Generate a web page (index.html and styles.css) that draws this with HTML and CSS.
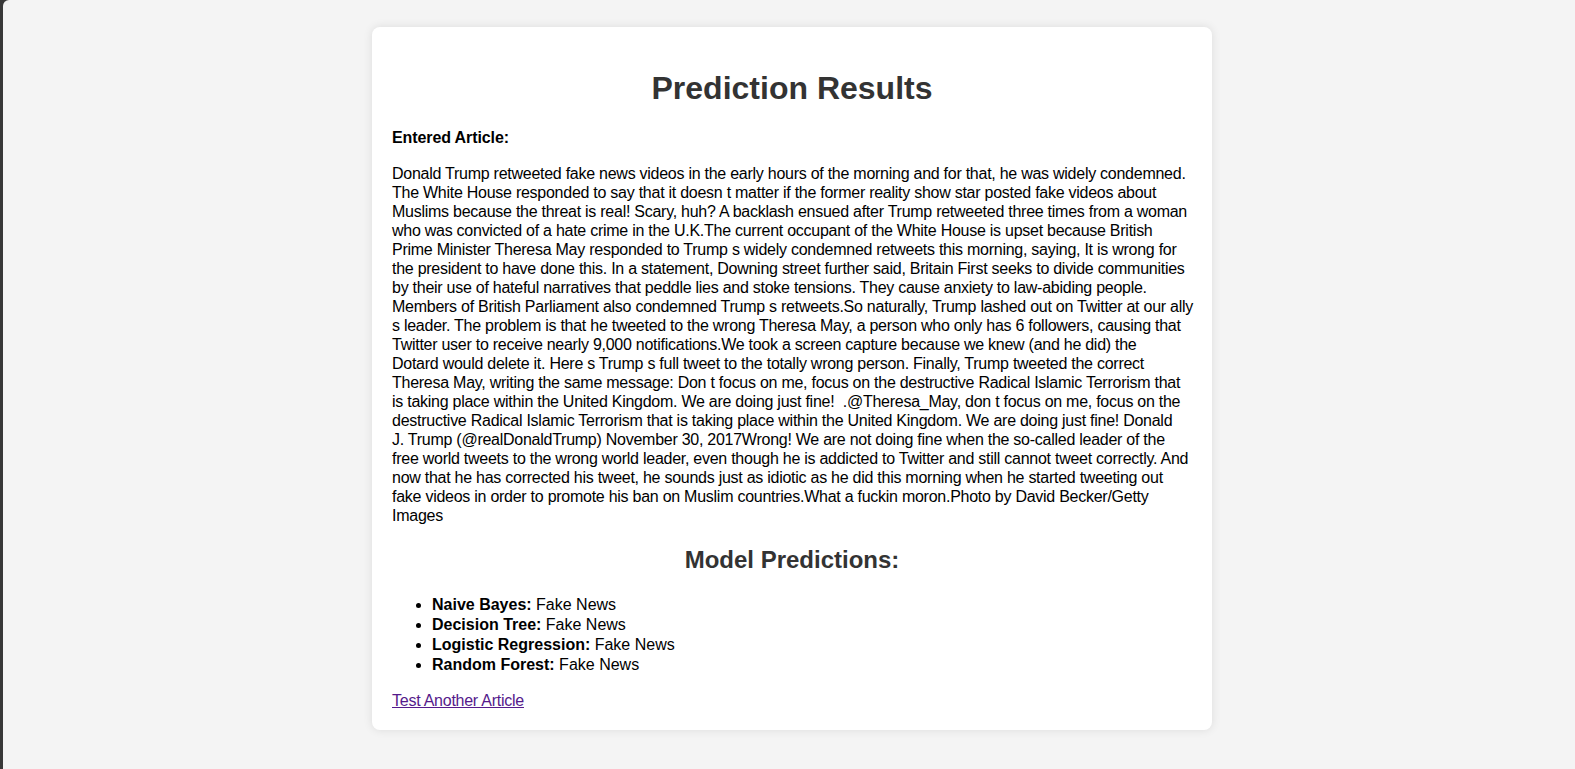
FILE: index.html
```html
<!DOCTYPE html>
<html lang="en">
<head>
<meta charset="utf-8">
<title>Prediction Results</title>
<link rel="stylesheet" href="styles.css">
</head>
<body>
<div class="card">
  <h1 class="title">Prediction Results</h1>
  <p class="label"><strong>Entered Article:</strong></p>
  <p class="article">Donald Trump retweeted fake news videos in the early hours of the morning and for that, he was widely condemned.<br>
The White House responded to say that it doesn t matter if the former reality show star posted fake videos about<br>
Muslims because the threat is real! Scary, huh? A backlash ensued after Trump retweeted three times from a woman<br>
who was convicted of a hate crime in the U.K.The current occupant of the White House is upset because British<br>
Prime Minister Theresa May responded to Trump s widely condemned retweets this morning, saying, It is wrong for<br>
the president to have done this. In a statement, Downing street further said, Britain First seeks to divide communities<br>
by their use of hateful narratives that peddle lies and stoke tensions. They cause anxiety to law-abiding people.<br>
Members of British Parliament also condemned Trump s retweets.So naturally, Trump lashed out on Twitter at our ally<br>
s leader. The problem is that he tweeted to the wrong Theresa May, a person who only has 6 followers, causing that<br>
Twitter user to receive nearly 9,000 notifications.We took a screen capture because we knew (and he did) the<br>
Dotard would delete it. Here s Trump s full tweet to the totally wrong person. Finally, Trump tweeted the correct<br>
Theresa May, writing the same message: Don t focus on me, focus on the destructive Radical Islamic Terrorism that<br>
is taking place within the United Kingdom. We are doing just fine!&nbsp; .@Theresa_May, don t focus on me, focus on the<br>
destructive Radical Islamic Terrorism that is taking place within the United Kingdom. We are doing just fine! Donald<br>
J. Trump (@realDonaldTrump) November 30, 2017Wrong! We are not doing fine when the so-called leader of the<br>
free world tweets to the wrong world leader, even though he is addicted to Twitter and still cannot tweet correctly. And<br>
now that he has corrected his tweet, he sounds just as idiotic as he did this morning when he started tweeting out<br>
fake videos in order to promote his ban on Muslim countries.What a fuckin moron.Photo by David Becker/Getty<br>
Images</p>
  <h2 class="subtitle">Model Predictions:</h2>
  <ul class="predictions">
    <li><strong>Naive Bayes:</strong> Fake News</li>
    <li><strong>Decision Tree:</strong> Fake News</li>
    <li><strong>Logistic Regression:</strong> Fake News</li>
    <li><strong>Random Forest:</strong> Fake News</li>
  </ul>
  <div class="back"><a class="back-link" href="#">Test Another Article</a></div>
</div>
</body>
</html>
```

FILE: styles.css
```css
html {
  background: #383838;
  height: 100%;
}

body {
  margin: 0 0 0 3px;
  padding: 27px 0 39px 6px;
  min-height: 100%;
  box-sizing: border-box;
  background: #f4f4f4;
  border-top-left-radius: 6px;
  font-family: "Liberation Sans", Arial, sans-serif;
  font-size: 16px;
  color: #000;
}

.card {
  max-width: 800px;
  margin: 0 auto;
  padding: 20px;
  background: #fff;
  border-radius: 8px;
  box-shadow: 0 0 10px rgba(0, 0, 0, 0.1);
}

.title {
  margin: 23px 0 21px;
  font-size: 32px;
  line-height: 37px;
  text-align: center;
  color: #333;
}

.label {
  margin: 16px 0;
  line-height: 19px;
  letter-spacing: -0.1px;
}

.article {
  margin: 17px 0 16px;
  line-height: 19px;
  letter-spacing: -0.26px;
  white-space: nowrap;
}

.subtitle {
  margin: 21px 0;
  font-size: 24px;
  line-height: 28px;
  text-align: center;
  color: #333;
}

.predictions {
  margin: 21px 0 16px;
  padding-left: 40px;
}

.predictions li {
  line-height: 20px;
}

.back {
  margin-top: 16px;
  line-height: 19px;
}

.back-link {
  color: #551a8b;
  letter-spacing: -0.25px;
}
```
